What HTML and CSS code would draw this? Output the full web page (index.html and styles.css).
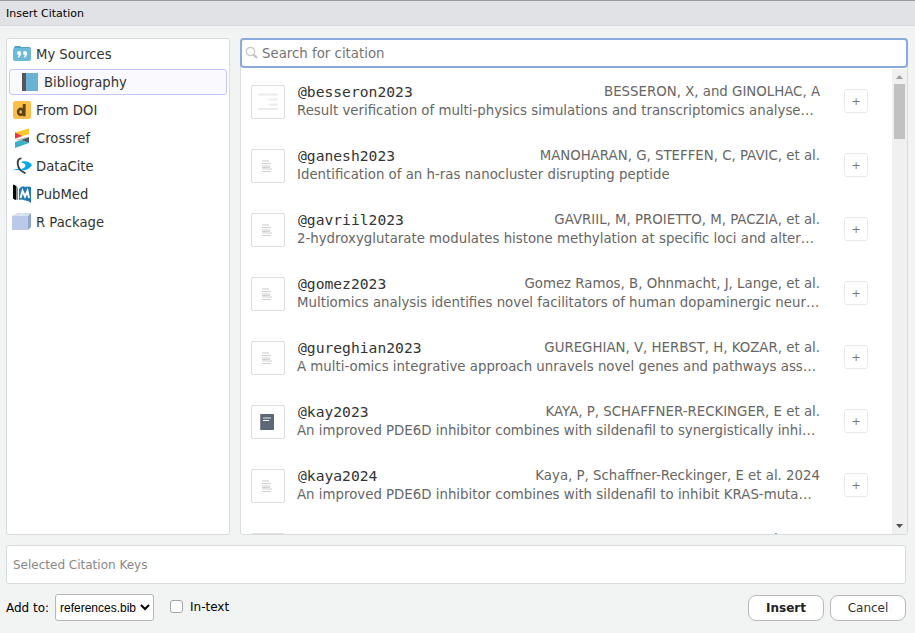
FILE: index.html
```html
<!DOCTYPE html>
<html lang="en">
<head>
<meta charset="utf-8">
<title>Insert Citation</title>
<link rel="stylesheet" href="styles.css">
</head>
<body>
<svg class="defs" aria-hidden="true">
  <symbol id="doc" viewBox="0 0 32 32">
    <path d="M10 11h7M10 16h8M10 19h10" stroke="#e6e6e6" stroke-width="2"/>
    <path d="M10 13.500h9M10 17.500h8M10 21.500h9" stroke="#d2d2d2" stroke-width="1"/>
  </symbol>
  <symbol id="lines" viewBox="0 0 32 32">
    <path d="M7 8.500h18M17.500 13.500h7.500M17.500 18.500h7.500M7 23h18" stroke="#ebebeb" stroke-width="2" stroke-linecap="round"/>
  </symbol>
  <symbol id="book" viewBox="0 0 32 32">
    <rect x="8" y="8" width="14" height="16" rx="1" fill="#5c6778"/>
    <path d="M8.500 8v16" stroke="#828b99"/>
    <path d="M11 12h8" stroke="#a2a9b3" stroke-width="2"/>
    <path d="M11 14.500h6" stroke="#fff"/>
  </symbol>
</svg>
<header class="titlebar">Insert Citation</header>
<main class="panes">
  <nav class="sources">
    <div class="source">
      <svg viewBox="0 0 20 20"><path d="M2 5V3.500Q2 2 3.500 2h4Q8.500 2 9 3h8q2 0 2 2z" fill="#4fa3c8"/><rect x="1" y="4" width="18" height="13" rx="2" fill="#6db9d9"/><circle cx="7" cy="9" r="2" fill="#fff"/><circle cx="13" cy="9" r="2" fill="#fff"/><path d="M8.300 9q0 3-2.300 4M14.300 9q0 3-2.300 4" fill="none" stroke="#fff" stroke-width="1.400"/></svg>
      <span>My Sources</span>
    </div>
    <div class="source selected">
      <svg viewBox="0 0 20 20"><path d="M3 1h15v18H3z" fill="#6ab2d5"/><path d="M2 1h4v18H2z" fill="#575757"/></svg>
      <span>Bibliography</span>
    </div>
    <div class="source">
      <svg viewBox="0 0 20 20"><rect x="1" y="1" width="18" height="18" rx="2.500" fill="#fcbf49"/><ellipse cx="8.700" cy="11.900" rx="2.600" ry="3" fill="none" stroke="#5b4518" stroke-width="2.600"/><path d="M12.200 4v12.300" stroke="#5b4518" stroke-width="2.800"/></svg>
      <span>From DOI</span>
    </div>
    <div class="source">
      <svg viewBox="0 0 20 20"><path d="M3 4.500L17 .5V6L10 8.300z" fill="#ffc72c"/><path d="M3 4.500L10.500 8 3 10.800z" fill="#ef3340"/><path d="M3 12L16.500 8.500 9 12.500z" fill="#c8c2b8"/><path d="M9 12l8-3v6z" fill="#4f5858"/><path d="M3 14L9 12l8 3L3 20z" fill="#3eb1c8"/></svg>
      <span>Crossref</span>
    </div>
    <div class="source">
      <svg viewBox="0 0 20 20"><path d="M10 5.500Q17 4.500 20 9q-3 5-9.500 5.500L9.500 13q4-1.200 4-3.500Q13 7 9.500 6.800z" fill="#00a8e6"/><path d="M0 14.300q5-1.500 8-1.800l2 2q-5-.7-10-.2z" fill="#00a8e6"/><path d="M9.500 2.300Q5 2.500 5.800 8.500T13.500 17.300" fill="none" stroke="#303c42" stroke-width="1.800"/></svg>
      <span>DataCite</span>
    </div>
    <div class="source">
      <svg viewBox="0 0 20 20"><path d="M1.500 1l2 1v13.500l-2-1z" fill="#000" stroke="#000"/><path d="M4 1l2 3v12l-2-.5z" fill="#8c8c8c"/><path d="M7 5Q10 1 13 3q3-1 6 0v16q-3-3-6-2.500-4-1.500-6-.5z" fill="#2279ae"/><path d="M8.500 14L10.500 7 13 12.500 15.500 7l1.500 7" fill="none" stroke="#fff" stroke-width="2"/></svg>
      <span>PubMed</span>
    </div>
    <div class="source">
      <svg viewBox="0 0 20 20"><path d="M0 4L5 1h14l-3 3z" fill="#d5dff0"/><path d="M16 4l3-3v14l-3 3z" fill="#8da4cf"/><path d="M0 4h16v14H0z" fill="#b9c9e8"/><path d="M8 4l4-3" stroke="#f0f4fb"/></svg>
      <span>R Package</span>
    </div>
  </nav>
  <section class="results">
    <label class="search">
      <svg viewBox="0 0 14 14"><circle cx="5.500" cy="5.500" r="4.200" fill="#fafafa" stroke="#c8c8c8" stroke-width="1.200"/><path d="M8.700 8.700L12 12" stroke="#c0c0c0" stroke-width="2"/></svg>
      <input type="text" placeholder="Search for citation">
    </label>
    <div class="listwrap">
      <div class="list">
        <article class="row"><div class="thumb"><svg><use href="#lines"/></svg></div><div class="info"><div class="head"><span class="key">@besseron2023</span><span class="authors">BESSERON, X, and GINOLHAC, A</span></div><div class="desc">Result verification of multi-physics simulations and transcriptomics analyse…</div></div><button class="add">+</button></article>
        <article class="row"><div class="thumb"><svg><use href="#doc"/></svg></div><div class="info"><div class="head"><span class="key">@ganesh2023</span><span class="authors">MANOHARAN, G, STEFFEN, C, PAVIC, et al.</span></div><div class="desc">Identification of an h-ras nanocluster disrupting peptide</div></div><button class="add">+</button></article>
        <article class="row"><div class="thumb"><svg><use href="#doc"/></svg></div><div class="info"><div class="head"><span class="key">@gavriil2023</span><span class="authors">GAVRIIL, M, PROIETTO, M, PACZIA, et al.</span></div><div class="desc">2-hydroxyglutarate modulates histone methylation at specific loci and alter…</div></div><button class="add">+</button></article>
        <article class="row"><div class="thumb"><svg><use href="#doc"/></svg></div><div class="info"><div class="head"><span class="key">@gomez2023</span><span class="authors">Gomez Ramos, B, Ohnmacht, J, Lange, et al.</span></div><div class="desc">Multiomics analysis identifies novel facilitators of human dopaminergic neur…</div></div><button class="add">+</button></article>
        <article class="row"><div class="thumb"><svg><use href="#doc"/></svg></div><div class="info"><div class="head"><span class="key">@gureghian2023</span><span class="authors">GUREGHIAN, V, HERBST, H, KOZAR, et al.</span></div><div class="desc">A multi-omics integrative approach unravels novel genes and pathways ass…</div></div><button class="add">+</button></article>
        <article class="row"><div class="thumb"><svg><use href="#book"/></svg></div><div class="info"><div class="head"><span class="key">@kay2023</span><span class="authors">KAYA, P, SCHAFFNER-RECKINGER, E et al.</span></div><div class="desc">An improved PDE6D inhibitor combines with sildenafil to synergistically inhi…</div></div><button class="add">+</button></article>
        <article class="row"><div class="thumb"><svg><use href="#doc"/></svg></div><div class="info"><div class="head"><span class="key">@kaya2024</span><span class="authors">Kaya, P, Schaffner-Reckinger, E et al. 2024</span></div><div class="desc">An improved PDE6D inhibitor combines with sildenafil to inhibit KRAS-muta…</div></div><button class="add">+</button></article>
        <article class="row"><div class="thumb"></div><div class="info"><div class="head"><span class="key"></span><span class="authors">et al. 2024</span></div></div></article>
      </div>
      <div class="scrollbar">
        <svg viewBox="0 0 15 15"><path d="M4 10h7L7.500 6z" fill="#a0a0a0"/></svg>
        <div class="grip"></div>
        <svg class="down" viewBox="0 0 15 15"><path d="M4 5h7L7.500 9z" fill="#505050"/></svg>
      </div>
    </div>
  </section>
</main>
<div class="keys">Selected Citation Keys</div>
<footer class="actions">
  <span class="addto">Add to:</span>
  <select><option>references.bib</option></select>
  <label class="intext"><input type="checkbox"><span>In-text</span></label>
  <button class="btn primary">Insert</button>
  <button class="btn">Cancel</button>
</footer>
</body>
</html>
```
FILE: styles.css
```css
* { box-sizing: border-box; }
body {
  margin: 0;
  width: 915px;
  height: 633px;
  overflow: hidden;
  background: #f2f4f4;
  font-family: "DejaVu Sans", sans-serif;
  font-size: 13.33px;
  color: #333;
}
.defs { display: none; }
.titlebar {
  height: 26px;
  border-top: 1px solid #999;
  border-bottom: 1px solid #d5d7dc;
  background: #e1e2e6;
  padding: 1px 0 0 6px;
  font-size: 11px;
  line-height: 24px;
  color: #000;
}
.panes { display: flex; gap: 10px; padding: 12px 7px 0 6px; }
.sources {
  width: 224px;
  height: 497px;
  background: #fff;
  border: 1px solid #d9dcdc;
  border-radius: 3px;
  padding: 1px 2px;
  font-size: 13.2px;
}
.source {
  height: 28px;
  display: flex;
  align-items: center;
  gap: 4px;
  padding-left: 3px;
}
.source svg { width: 20px; height: 20px; }
.selected {
  height: 26px;
  margin: 1px 0;
  padding-left: 10px;
  background: #faf9fe;
  border: 1px solid #c6c5f7;
  border-radius: 3px;
}
.results {
  width: 668px;
  height: 497px;
  background: #fff;
  border: 1px solid #d9dcdc;
  border-radius: 3px;
  display: flex;
  flex-direction: column;
}
.search {
  height: 30px;
  flex: none;
  margin: -1px -1px 0;
  border: 2px solid #8aaadc;
  border-radius: 4px;
  display: flex;
  align-items: center;
  padding-left: 3px;
  gap: 3px;
}
.search svg { width: 14px; height: 14px; }
.search input {
  flex: 1;
  border: 0;
  outline: 0;
  padding: 0;
  background: none;
  font: inherit;
}
.search input::placeholder { color: #757575; }
.listwrap { flex: 1; min-height: 0; display: flex; padding-top: 1px; }
.list { flex: 1; overflow: hidden; padding-top: 1px; }
.row { height: 64px; display: flex; align-items: flex-start; padding: 15px 0 0 10px; }
.thumb {
  width: 34px;
  height: 34px;
  border: 1px solid #dfdfdf;
  border-radius: 2px;
}
.thumb svg { display: block; width: 32px; height: 32px; }
.info { width: 523px; margin: -3px 0 0 12px; color: #666; }
.head { display: flex; justify-content: space-between; height: 20px; line-height: 20px; }
.key { font: 14.667px/20px "DejaVu Sans Mono", monospace; color: #333; padding-left: 1px; }
.desc { line-height: 18px; white-space: nowrap; }
.add {
  width: 24px;
  height: 24px;
  margin: 4px 0 0 24px;
  padding: 1px 0 0;
  border: 1px solid #e9e9e9;
  border-radius: 3px;
  background: #fff;
  color: #777;
  font: 11px/22px "DejaVu Sans", sans-serif;
}
.scrollbar { width: 15px; background: #f0f0f0; display: flex; flex-direction: column; }
.scrollbar svg { width: 15px; height: 15px; }
.grip { width: 11px; height: 55px; margin-left: 2px; background: #c1c1c1; }
.scrollbar .down { margin-top: auto; }
.keys {
  width: 900px;
  height: 39px;
  margin: 10px 0 0 6px;
  padding: 1px 0 0 6px;
  background: #fff;
  border: 1px solid #d9dcdc;
  border-radius: 3px;
  font-size: 12px;
  line-height: 37px;
  color: #888;
}
.actions {
  display: flex;
  align-items: center;
  height: 27px;
  margin: 10px 9px 0 6px;
  font-size: 12px;
  color: #000;
}
.addto { width: 49px; }
.actions select {
  width: 99px;
  height: 27px;
  padding: 0;
  background: #fff;
  border: 1px solid #b5b5b5;
  border-radius: 3px;
  font: 12px "Liberation Sans", sans-serif;
  color: #000;
}
.intext { display: flex; align-items: center; gap: 7px; margin: -2px auto 0 16px; }
.intext input {
  appearance: none;
  width: 13px;
  height: 13px;
  margin: 0;
  border: 1px solid #a5a5a5;
  border-radius: 3px;
  background: #fff;
}
.btn {
  width: 76px;
  height: 26px;
  margin-left: 6px;
  padding: 0;
  background: #fff;
  border: 1px solid #b8b8b8;
  border-radius: 8px;
  font: 12px "DejaVu Sans", sans-serif;
  color: #333;
}
.primary { font-weight: bold; color: #222; }
```
